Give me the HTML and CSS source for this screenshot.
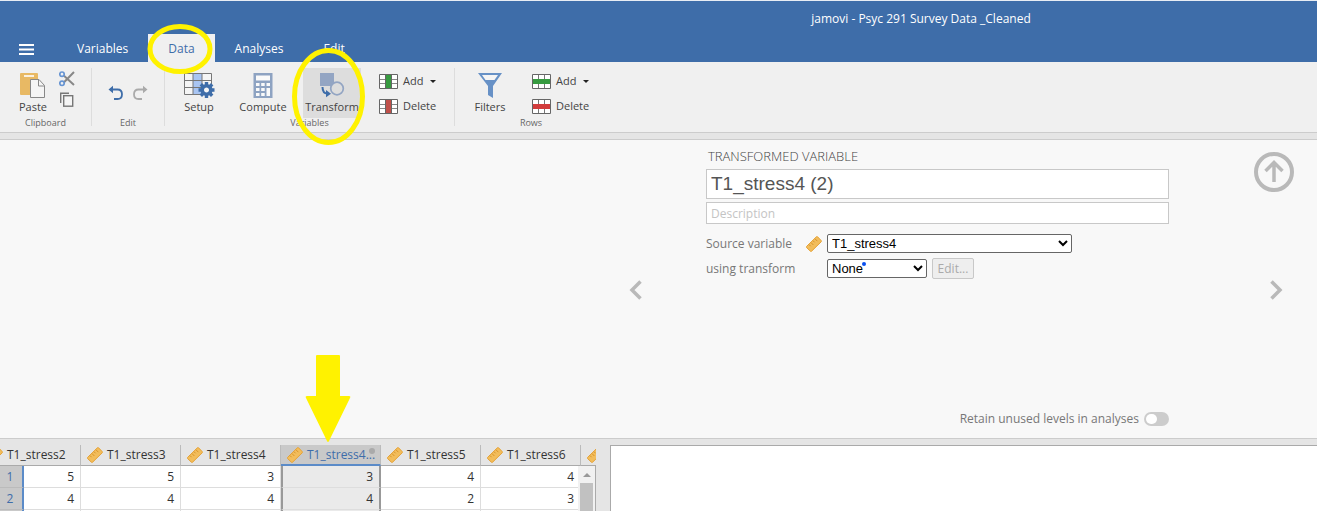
FILE: index.html
```html
<!DOCTYPE html>
<html lang="en">
<head>
<meta charset="utf-8">
<title>jamovi - Psyc 291 Survey Data _Cleaned</title>
<link rel="stylesheet" href="styles.css">
</head>
<body>
<svg class="defs" aria-hidden="true">
  <symbol id="ruler" viewBox="0 0 16 16">
    <path d="M.6 10.4 10.4.8Q11 .3 11.6.8L15.2 4.6Q15.7 5.2 15.2 5.8L5.6 15.2Q5 15.7 4.4 15.2L.6 11.6Q.2 11 .6 10.4Z" fill="#f2bd5c" stroke="#e5a237"/>
    <path d="m3 8.6 1.6 1.6M5 6.6l2.4 2.4M7 4.7l1.6 1.6M9 2.8l2.4 2.4" stroke="#d8932c" fill="none"/>
  </symbol>
</svg>

<header class="titlebar">
  <div class="title">jamovi - Psyc 291 Survey Data _Cleaned</div>
  <nav class="tabs">
    <button class="menu" aria-label="Menu"><svg width="15" height="11" viewBox="0 0 15 11"><path d="M0 1h15M0 5.5h15M0 10h15" stroke="#fff" stroke-width="2"/></svg></button>
    <button class="tab">Variables</button>
    <button class="tab active">Data</button>
    <button class="tab">Analyses</button>
    <button class="tab">Edit</button>
  </nav>
</header>

<div class="toolbar">
  <section class="group clipboard">
    <div class="tools">
      <button class="big paste">
        <svg width="26" height="26" viewBox="0 0 26 26"><path d="M1 0h16q1 0 1 1v21H1q-1 0-1-1V1q0-1 1-1Z" fill="#e8b964"/><path d="M4 3h10" stroke="#fff" stroke-width="1.6"/><path d="M10.5 6.500h8.500l5.500 6v12h-14Z" fill="#f5f5f5" stroke="#888"/><path d="M18.500 6.500v6.500h6" fill="none" stroke="#888"/></svg>
        Paste
      </button>
      <div class="small-stack">
        <button aria-label="Cut"><svg width="16" height="16" viewBox="0 0 16 16"><path d="M5 4.800 15 14M5 11.200 15 1" stroke="#888" stroke-width="2"/><circle cx="3" cy="3.200" r="2.200" fill="none" stroke="#6694d2" stroke-width="1.700"/><circle cx="3" cy="12.300" r="2.200" fill="none" stroke="#6694d2" stroke-width="1.700"/></svg></button>
        <button aria-label="Copy"><svg width="16" height="16" viewBox="0 0 16 16"><path d="M1.700 11V1.200H10" fill="none" stroke="#777" stroke-width="1.400"/><rect x="4.700" y="3.700" width="9" height="10.500" fill="#f5f5f5" stroke="#777" stroke-width="1.400"/></svg></button>
      </div>
    </div>
    <div class="caption">Clipboard</div>
  </section>
  <section class="group history">
    <div class="tools">
      <button aria-label="Undo"><svg width="16" height="16" viewBox="0 0 16 16"><path d="M2 4.500h7.500q4.500 0 4.500 4.700T9.500 14H6" fill="none" stroke="#3e6da9" stroke-width="1.800"/><path d="M.5 4.500 5 .8v7.400Z" fill="#3e6da9"/></svg></button>
      <button aria-label="Redo"><svg width="16" height="16" viewBox="0 0 16 16"><path d="M14 4.500H6.500Q2 4.500 2 9.200T6.500 14H10" fill="none" stroke="#aaa" stroke-width="1.800"/><path d="M15.500 4.500 11 .8v7.400Z" fill="#aaa"/></svg></button>
    </div>
    <div class="caption">Edit</div>
  </section>
  <section class="group variables">
    <div class="tools">
      <button class="big setup">
        <svg width="32" height="26" viewBox="0 0 32 26"><path d="M1.500.5h27v21h-27Z" fill="#f5f5f5"/><path d="M10 0h9v22h-9Z" fill="#a9c5f2"/><path d="M1.500.5h27v21h-27ZM1 7.500h28M1 14.500h28M10 0v22M19 0v22" fill="none" stroke="#777"/><g transform="translate(23.500 17)"><path d="M0-8V8M-8 0H8M-5.700-5.700 5.700 5.700M5.700-5.700-5.700 5.700" stroke="#3e6da9" stroke-width="3.400"/><circle r="4.300" fill="#f5f5f5" stroke="#3e6da9" stroke-width="3.600"/></g></svg>
        Setup
      </button>
      <button class="big compute">
        <svg width="20" height="26" viewBox="0 0 20 26"><path d="M.5 0h19v25H.5Z" fill="#8ea3c2"/><path d="M3 2.500h14v5H3ZM3 10h3.500v3H3ZM8.200 10h3.500v3H8.200ZM13.500 10H17v3h-3.500ZM3 15h3.500v3H3ZM8.200 15h3.500v3H8.200ZM13.500 15H17v8h-3.500ZM3 20h3.500v3H3ZM8.200 20h3.500v3H8.200Z" fill="#fafafa"/></svg>
        Compute
      </button>
      <button class="big transform selected">
        <svg width="26" height="26" viewBox="0 0 26 26"><path d="M1 0h14v13H1Z" fill="#93a5c3"/><circle cx="18" cy="15.500" r="6.300" fill="#ddd" stroke="#93a5c3" stroke-width="1.700"/><path d="M3.500 14q0 6.500 5 6.500" fill="none" stroke="#3e6da9" stroke-width="2"/><path d="m7 17 5 3.700-5 3.500Z" fill="#3e6da9"/></svg>
        Transform
      </button>
      <div class="rows">
        <button class="line"><svg width="19" height="15" viewBox="0 0 19 15"><path d="M.5.5h18v14H.5Z" fill="#fff"/><path d="M.5 5.500h18M.5 9.500h18" stroke="#888"/><path d="M7 0h6v15H7Z" fill="#379b40"/><path d="M.5.5h18v14H.5ZM6.500 0v15M12.500 0v15" fill="none" stroke="#666"/></svg>Add<span class="caret"></span></button>
        <button class="line"><svg width="19" height="15" viewBox="0 0 19 15"><path d="M.5.5h18v14H.5Z" fill="#fff"/><path d="M.5 5.500h18M.5 9.500h18" stroke="#888"/><path d="M7 0h6v15H7Z" fill="#c0504a"/><path d="M.5.5h18v14H.5ZM6.500 0v15M12.500 0v15" fill="none" stroke="#666"/></svg>Delete</button>
      </div>
    </div>
    <div class="caption">Variables</div>
  </section>
  <section class="group filter-rows">
    <div class="tools">
      <button class="big filters">
        <svg width="24" height="26" viewBox="0 0 24 26"><path d="M0 0h24l-9 13v12l-5-3v-9Z" fill="#6791c6"/><path d="M4 2h16l-3.500 5H7.500Z" fill="#f5f5f5"/></svg>
        Filters
      </button>
      <div class="rows">
        <button class="line"><svg width="19" height="15" viewBox="0 0 19 15"><path d="M.5.5h18v14H.5Z" fill="#fff"/><path d="M6.500 0v15M12.500 0v15" stroke="#777"/><path d="M0 5h19v5H0Z" fill="#379b40"/><path d="M.5.5h18v14H.5Z" fill="none" stroke="#666"/></svg>Add<span class="caret"></span></button>
        <button class="line"><svg width="19" height="15" viewBox="0 0 19 15"><path d="M.5.5h18v14H.5Z" fill="#fff"/><path d="M6.500 0v15M12.500 0v15" stroke="#777"/><path d="M0 5h19v5H0Z" fill="#d23c3c"/><path d="M.5.5h18v14H.5Z" fill="none" stroke="#666"/></svg>Delete</button>
      </div>
    </div>
    <div class="caption">Rows</div>
  </section>
</div>

<main class="editor">
  <button class="prev" aria-label="Previous variable"><svg width="14" height="20" viewBox="0 0 14 20"><path d="M11.500 1.500 3 10l8.500 8.500" fill="none" stroke="#b9b9b9" stroke-width="3.500"/></svg></button>
  <form class="form">
    <h1>TRANSFORMED VARIABLE</h1>
    <input class="name" aria-label="Name" value="T1_stress4 (2)">
    <input class="description" aria-label="Description" placeholder="Description">
    <div class="field source">
      <label for="source">Source variable</label>
      <svg class="ruler"><use href="#ruler"/></svg>
      <select id="source"><option>T1_stress4</option></select>
    </div>
    <div class="field using">
      <label for="using">using transform</label>
      <span class="marked"><select id="using"><option>None</option></select></span>
      <button class="edit" type="button" disabled>Edit...</button>
    </div>
    <label class="retain">Retain unused levels in analyses<input type="checkbox"></label>
  </form>
  <div class="side">
    <button class="up" aria-label="Close editor"><svg width="40" height="40" viewBox="0 0 40 40"><circle cx="20" cy="20" r="18" fill="none" stroke="#b9b9b9" stroke-width="4"/><path d="M20 30V11M11.500 19 20 10.500 28.500 19" fill="none" stroke="#b9b9b9" stroke-width="3.500"/></svg></button>
    <button class="next" aria-label="Next variable"><svg width="14" height="20" viewBox="0 0 14 20"><path d="M2.500 1.500 11 10l-8.500 8.500" fill="none" stroke="#b9b9b9" stroke-width="3.500"/></svg></button>
  </div>
</main>

<div class="lower">
  <div class="sheet">
    <table>
      <colgroup><col class="c-num"><col class="c-first"><col class="c"><col class="c"><col class="c"><col class="c"><col class="c"><col class="c"></colgroup>
      <thead>
        <tr>
          <th colspan="2"><div class="head first"><svg class="ruler"><use href="#ruler"/></svg>T1_stress2</div></th>
          <th><div class="head"><svg class="ruler"><use href="#ruler"/></svg>T1_stress3</div></th>
          <th><div class="head"><svg class="ruler"><use href="#ruler"/></svg>T1_stress4</div></th>
          <th class="sel"><div class="head"><svg class="ruler"><use href="#ruler"/></svg>T1_stress4...<i class="dot"></i></div></th>
          <th><div class="head"><svg class="ruler"><use href="#ruler"/></svg>T1_stress5</div></th>
          <th><div class="head"><svg class="ruler"><use href="#ruler"/></svg>T1_stress6</div></th>
          <th><div class="head"><svg class="ruler"><use href="#ruler"/></svg></div></th>
        </tr>
      </thead>
      <tbody>
        <tr><th>1</th><td>5</td><td>5</td><td>3</td><td class="sel">3</td><td>4</td><td>4</td><td></td></tr>
        <tr><th>2</th><td>4</td><td>4</td><td>4</td><td class="sel">4</td><td>2</td><td>3</td><td></td></tr>
        <tr><th></th><td></td><td></td><td></td><td class="sel"></td><td></td><td></td><td></td></tr>
      </tbody>
    </table>
    <div class="scrollbar"><span class="arrow"></span><span class="thumb"></span></div>
  </div>
  <div class="results"></div>
</div>

<svg class="marks" width="400" height="450" viewBox="0 0 400 450" aria-hidden="true">
  <g fill="none" stroke="#fff200" stroke-width="5"><ellipse cx="180" cy="49" rx="30" ry="22.500"/><ellipse cx="328.500" cy="96.500" rx="34" ry="46"/></g>
  <path d="M317 355h22q1 0 1 1v40h9q2 0 1 2l-21 43q-1 2-2 0l-21-43q-1-2 1-2h9v-40q0-1 1-1Z" fill="#fff200"/>
</svg>
</body>
</html>
```
FILE: styles.css
```css
* { box-sizing: border-box; }

body {
  margin: 0;
  height: 100vh;
  display: flex;
  flex-direction: column;
  overflow: hidden;
  position: relative;
  background: #e5e5e5;
  color: #333;
  font: 12px/16px "Open Sans", "Noto Sans", sans-serif;
}

button {
  padding: 0;
  border: 0;
  background: none;
  color: #444;
  font: inherit;
}

svg { display: block; flex: none; }
.defs { position: absolute; width: 0; height: 0; }
.ruler { width: 16px; height: 16px; }
.marks { position: absolute; left: 0; top: 0; pointer-events: none; }

/* Title bar and tabs */
.titlebar {
  flex: none;
  border-top: 1px solid #e8edf4;
  background: #3e6da9;
  color: #fff;
}
.title { height: 33px; padding: 10px 0 0 525px; text-align: center; }
.tabs { display: flex; height: 28px; }
.menu { width: 57px; padding: 2px 4px 0 0; display: grid; place-items: center; }
.tab { padding: 2px 20px 0; color: #fff; }
.tab.active { background: #f0f0f0; color: #3e6da9; }

/* Ribbon */
.toolbar {
  flex: none;
  display: flex;
  height: 71px;
  padding-top: 6px;
  background: #f0f0f0;
  border-bottom: 1px solid #ccc;
}
.toolbar button { font-size: 11px; }
.group { height: 58px; border-right: 1px solid #ddd; }
.group:last-child { border: 0; }
.tools { display: flex; height: 50px; }
.caption { font-size: 9px; line-height: 10px; text-align: center; color: #666; }
.big {
  height: 50px;
  padding-top: 5px;
  display: flex;
  flex-direction: column;
  align-items: center;
}
.selected { background: #ddd; }
.clipboard { width: 92px; }
.clipboard .tools { padding-left: 14px; gap: 7px; }
.paste { width: 38px; }
.small-stack { display: flex; flex-direction: column; gap: 5px; padding-top: 3px; }
.history { width: 73px; }
.history .tools { justify-content: center; align-items: center; gap: 8px; }
.variables { width: 290px; }
.variables .tools { padding-left: 10px; gap: 6px; }
.setup { width: 48px; }
.compute { width: 68px; }
.transform { width: 58px; }
.rows { display: flex; flex-direction: column; gap: 9px; padding: 5px 0 0 12px; }
.line { display: flex; align-items: center; gap: 5px; height: 16px; }
.caret {
  margin-left: 2px;
  border: 3px solid transparent;
  border-top-color: #222;
  border-bottom: 0;
}
.filter-rows { width: 152px; }
.filter-rows .tools { padding-left: 11px; }
.filters { width: 48px; }
.filter-rows .rows { padding-left: 18px; }

/* Variable editor */
.editor {
  flex: none;
  display: grid;
  grid-template-columns: 1fr 463px 148px;
  height: 300px;
  margin-top: 6px;
  border: solid #ccc;
  border-width: 1px 0;
  background: #f8f8f8;
}
.prev { justify-self: end; align-self: center; padding-top: 2px; margin-right: 63px; }
.form { display: flex; flex-direction: column; padding: 8px 0 11px; color: #777; }
h1 { margin: 0 0 5px 2px; font-size: 13px; line-height: 16px; font-weight: 300; color: #444; }
.name, .description { width: 100%; border: 1px solid #c8c8c8; padding: 0 4px; background: #fff; }
.name { height: 30px; font: 19px "Liberation Sans", Arial, sans-serif; color: #555; }
.description { height: 22px; margin: 3px 0 7px; font: inherit; }
.description::placeholder { color: #c4c4c4; }
.field { display: flex; align-items: center; height: 25px; }
.field label { width: 121px; }
.source label { width: 100px; }
.source .ruler { margin-right: 5px; }
.marked { position: relative; display: flex; }
.marked::after {
  content: "";
  position: absolute;
  left: 35px;
  top: 3px;
  width: 4px;
  height: 4px;
  border-radius: 50%;
  background: #0a50f0;
}
select {
  height: 19px;
  padding: 0;
  border: 1px solid #666;
  border-radius: 2px;
  background: #fff;
  color: #000;
  font: 13px "Liberation Sans", Arial, sans-serif;
}
#source { width: 245px; }
#using { width: 100px; }
.edit {
  height: 21px;
  width: 42px;
  margin-left: 5px;
  border: 1px solid #c8c8c8;
  border-radius: 2px;
  background: #eee;
  color: #aaa;
}
.retain { display: flex; align-items: center; justify-content: flex-end; gap: 5px; margin-top: auto; }
.retain input {
  appearance: none;
  display: flex;
  width: 25px;
  height: 14px;
  margin: 0;
  padding: 2px;
  border-radius: 7px;
  background: #ccc;
}
.retain input::before { content: ""; width: 11px; height: 10px; border-radius: 5px; background: #fff; }
.side { position: relative; display: grid; align-items: center; }
.side .next { justify-self: start; padding-top: 2px; margin-left: 100px; }
.side .up { position: absolute; left: 85px; top: 12px; }

/* Data sheet and results */
.lower { flex: 1; min-height: 0; display: flex; gap: 14px; padding-top: 6px; }
.sheet { position: relative; width: 596px; overflow: hidden; }
table { width: 681px; table-layout: fixed; border-collapse: separate; border-spacing: 0; background: #fff; }
.c-num { width: 24px; }
.c-first { width: 57px; }
.c { width: 100px; }
th, td { padding: 0; font-weight: 400; }
thead th {
  height: 21px;
  overflow: hidden;
  background: #e5e5e5;
  border-right: 1px solid #bbb;
  border-bottom: 1px solid #aaa;
}
.head { position: relative; display: flex; align-items: center; gap: 4px; width: 100px; height: 20px; padding-left: 6px; }
.head.first { margin-left: -19px; }
thead .sel { background: #c9c9c9; color: #3e6da9; border-bottom: 2px solid #5b8bc8; }
thead .sel .head { height: 19px; padding-top: 1px; }
.dot { position: absolute; right: 6px; top: 3px; width: 6px; height: 6px; border-radius: 50%; background: #aaa; }
tbody td { height: 22px; padding-right: 6px; text-align: right; border: solid #ddd; border-width: 0 1px 1px 0; }
tbody th { background: #c9c9c9; color: #3e6da9; padding-right: 2px; border-right: 2px solid #5b8bc8; border-bottom: 1px solid #bbb; }
tbody .sel { background: #eaeaea; border-right: 2px solid #999; border-left: 2px solid #999; }
.scrollbar {
  position: absolute;
  right: 0;
  top: 21px;
  bottom: 0;
  width: 18px;
  padding: 7px 2px 0;
  background: #f1f1f1;
  border-right: 1px solid #aaa;
}
.arrow { display: block; width: 0; margin: 0 auto 6px; border: 4px solid transparent; border-top: 0; border-bottom-color: #999; }
.thumb { display: block; height: 60px; background: #c1c1c1; }
.results { flex: 1; background: #fff; border: solid #aaa; border-width: 1px 0 0 1px; }
```
